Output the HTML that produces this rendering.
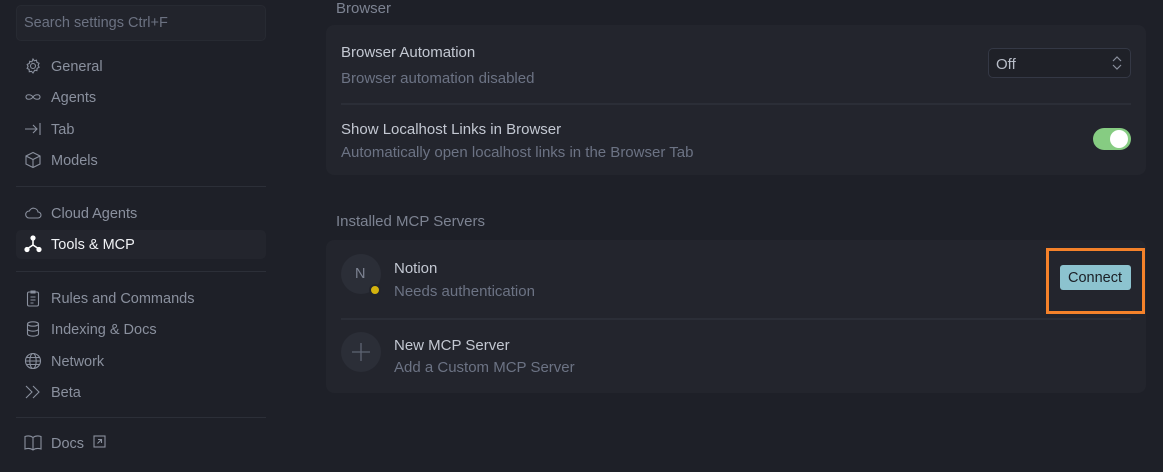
<!DOCTYPE html>
<html><head><style>
*{box-sizing:border-box;margin:0;padding:0}
body{width:1163px;height:472px;background:#1e2028;font-family:"Liberation Sans",sans-serif;color:#c8ccd6;position:relative;overflow:hidden;font-size:14.5px}
.a{position:absolute;white-space:nowrap}
.nav{color:#8a909e;font-size:14.5px}
.ic{position:absolute;left:24px;width:18px;height:18px}
.div{position:absolute;left:16px;width:250px;height:1px;background:#2c2f38}
.card{position:absolute;left:326px;width:820px;background:#23252d;border-radius:8px}
.t{color:#c3c8d2;font-size:15px}
.s{color:#6c7384;font-size:15px}
</style></head><body>
<div class="a" style="left:16px;top:5px;width:250px;height:36px;background:#22242c;border:1px solid #272a32;border-radius:5px"></div>
<div class="a" style="left:24px;top:15px;color:#6c7282;font-size:14.5px">Search settings Ctrl+F</div>

<svg class="ic" style="top:57px" viewBox="0 0 18 18" fill="none" stroke="#8a909e" stroke-width="1.1"><circle cx="9" cy="9" r="2.5"/><path d="M9 2l1.3 1.8 2.2-.6.4 2.2 2.1.9-.9 2.1 1 1.9-2 1-.2 2.3-2.2-.4L9 16l-1.5-1.7-2.2.4-.2-2.3-2-1 1-1.9-.9-2.1 2.1-.9.4-2.2 2.2.6z"/></svg>
<div class="a nav" style="left:51px;top:59px">General</div>
<svg class="ic" style="top:88px" viewBox="0 0 18 18" fill="none" stroke="#8a909e" stroke-width="1.1"><path d="M9 9c-2-3-7-3-7 0s5 3 7 0c2-3 7-3 7 0s-5 3-7 0z"/></svg>
<div class="a nav" style="left:51px;top:90px">Agents</div>
<svg class="ic" style="top:120px" viewBox="0 0 18 18" fill="none" stroke="#8a909e" stroke-width="1.1"><path d="M1 9h12M9 5l4 4-4 4M16 3v12"/></svg>
<div class="a nav" style="left:51px;top:122px">Tab</div>
<svg class="ic" style="top:151px" viewBox="0 0 18 18" fill="none" stroke="#8a909e" stroke-width="1.1"><path d="M9 1.5l7 3.5v8l-7 3.5-7-3.5V5zM2 5l7 3.5L16 5M9 8.5v8"/></svg>
<div class="a nav" style="left:51px;top:153px">Models</div>
<div class="div" style="top:186px"></div>
<svg class="ic" style="top:204px" viewBox="0 0 18 18" fill="none" stroke="#8a909e" stroke-width="1.1"><path d="M5 14h9a3 3 0 000-6 4.5 4.5 0 00-8.6-1A3.5 3.5 0 005 14z"/></svg>
<div class="a nav" style="left:51px;top:206px">Cloud Agents</div>
<div class="a" style="left:16px;top:230px;width:250px;height:29px;background:#23252d;border-radius:5px"></div>
<svg class="ic" style="top:235px" viewBox="0 0 18 18" fill="none" stroke="#fff" stroke-width="1.6"><path d="M9 3v7L3 14M9 10l6 4"/><circle cx="9" cy="3" r="1.8" fill="#fff"/><circle cx="3" cy="14.5" r="1.8" fill="#fff"/><circle cx="15" cy="14.5" r="1.8" fill="#fff"/></svg>
<div class="a" style="left:51px;top:237px;color:#f0f2f5">Tools &amp; MCP</div>
<div class="div" style="top:271px"></div>
<svg class="ic" style="top:289px" viewBox="0 0 18 18" fill="none" stroke="#8a909e" stroke-width="1.1"><rect x="3.5" y="3" width="11" height="14" rx="1.5"/><path d="M7 2h4v2H7zM6.5 8h5M6.5 11h5M6.5 14h3"/></svg>
<div class="a nav" style="left:51px;top:291px">Rules and Commands</div>
<svg class="ic" style="top:320px" viewBox="0 0 18 18" fill="none" stroke="#8a909e" stroke-width="1.1"><ellipse cx="9" cy="4" rx="5.5" ry="2.2"/><path d="M3.5 4v10c0 1.2 2.5 2.2 5.5 2.2s5.5-1 5.5-2.2V4M3.5 9c0 1.2 2.5 2.2 5.5 2.2s5.5-1 5.5-2.2"/></svg>
<div class="a nav" style="left:51px;top:322px">Indexing &amp; Docs</div>
<svg class="ic" style="top:352px" viewBox="0 0 18 18" fill="none" stroke="#8a909e" stroke-width="1.1"><circle cx="9" cy="9" r="7.5"/><ellipse cx="9" cy="9" rx="3.2" ry="7.5"/><path d="M1.5 9h15M2.5 5.5h13M2.5 12.5h13"/></svg>
<div class="a nav" style="left:51px;top:354px">Network</div>
<svg class="ic" style="top:383px" viewBox="0 0 18 18" fill="none" stroke="#8a909e" stroke-width="1.1"><path d="M2 3l6 6-6 6M9 3l6 6-6 6"/></svg>
<div class="a nav" style="left:51px;top:385px">Beta</div>
<div class="div" style="top:417px"></div>
<svg class="ic" style="top:433px" viewBox="0 0 18 18" fill="none" stroke="#8a909e" stroke-width="1.1"><path d="M1 3.5c3-1 5.5-1 8 1 2.5-2 5-2 8-1V16c-3-1-5.5-1-8 1-2.5-2-5-2-8-1zM9 4.5V17"/></svg>
<div class="a nav" style="left:51px;top:436px">Docs</div>
<svg class="a" style="left:93px;top:435px" width="13" height="13" viewBox="0 0 13 13" fill="none" stroke="#8a909e" stroke-width="1.1"><rect x="1" y="1" width="11" height="11"/><path d="M4.5 8.5l4-4M5 4.5h3.5V8"/></svg>

<div class="a s" style="left:336px;top:0px;color:#7d8392">Browser</div>
<div class="card" style="top:25px;height:150px"></div>
<div class="a t" style="left:341px;top:44px">Browser Automation</div>
<div class="a s" style="left:341px;top:70px">Browser automation disabled</div>
<div class="a" style="left:988px;top:48px;width:143px;height:30px;border:1px solid #343845;border-radius:5px;background:#1f2128"></div>
<div class="a" style="left:996px;top:56px;color:#b8bdc8;font-size:15px">Off</div>
<svg class="a" style="left:1111px;top:55px" width="12" height="16" viewBox="0 0 12 16" fill="none" stroke="#8a909e" stroke-width="1.2"><path d="M2 6l4-4 4 4M2 10l4 4 4-4"/></svg>
<div class="a" style="left:341px;top:103px;width:790px;height:2px;background:#2b2e37"></div>
<div class="a t" style="left:341px;top:121px">Show Localhost Links in Browser</div>
<div class="a s" style="left:341px;top:144px">Automatically open localhost links in the Browser Tab</div>
<div class="a" style="left:1093px;top:128px;width:38px;height:22px;border-radius:11px;background:#86cc82"></div>
<div class="a" style="left:1110px;top:130px;width:18px;height:18px;border-radius:50%;background:#fff"></div>

<div class="a s" style="left:336px;top:213px;color:#7d8392">Installed MCP Servers</div>
<div class="card" style="top:240px;height:153px"></div>
<div class="a" style="left:341px;top:254px;width:40px;height:40px;border-radius:50%;background:#2b2e37"></div>
<div class="a" style="left:355px;top:266px;color:#7d8392">N</div>
<div class="a" style="left:369px;top:284px;width:12px;height:12px;border-radius:50%;background:#d4b30e;border:2px solid #23252d"></div>
<div class="a t" style="left:394px;top:260px">Notion</div>
<div class="a s" style="left:394px;top:283px">Needs authentication</div>
<div class="a" style="left:1060px;top:265px;width:71px;height:25px;border-radius:3px;background:#8cc3cf"></div>
<div class="a" style="left:1068px;top:270px;color:#1b1f26;font-size:14.5px">Connect</div>
<div class="a" style="left:1046px;top:248px;width:99px;height:66px;border:3px solid #f5822a"></div>
<div class="a" style="left:341px;top:318px;width:790px;height:2px;background:#2b2e37"></div>
<div class="a" style="left:341px;top:332px;width:40px;height:40px;border-radius:50%;background:#2b2e37"></div>
<svg class="a" style="left:351px;top:342px" width="20" height="20" viewBox="0 0 20 20" stroke="#5e6473" stroke-width="1.3"><path d="M10 1v18M1 10h18"/></svg>
<div class="a t" style="left:394px;top:337px">New MCP Server</div>
<div class="a s" style="left:394px;top:359px">Add a Custom MCP Server</div>
</body></html>
